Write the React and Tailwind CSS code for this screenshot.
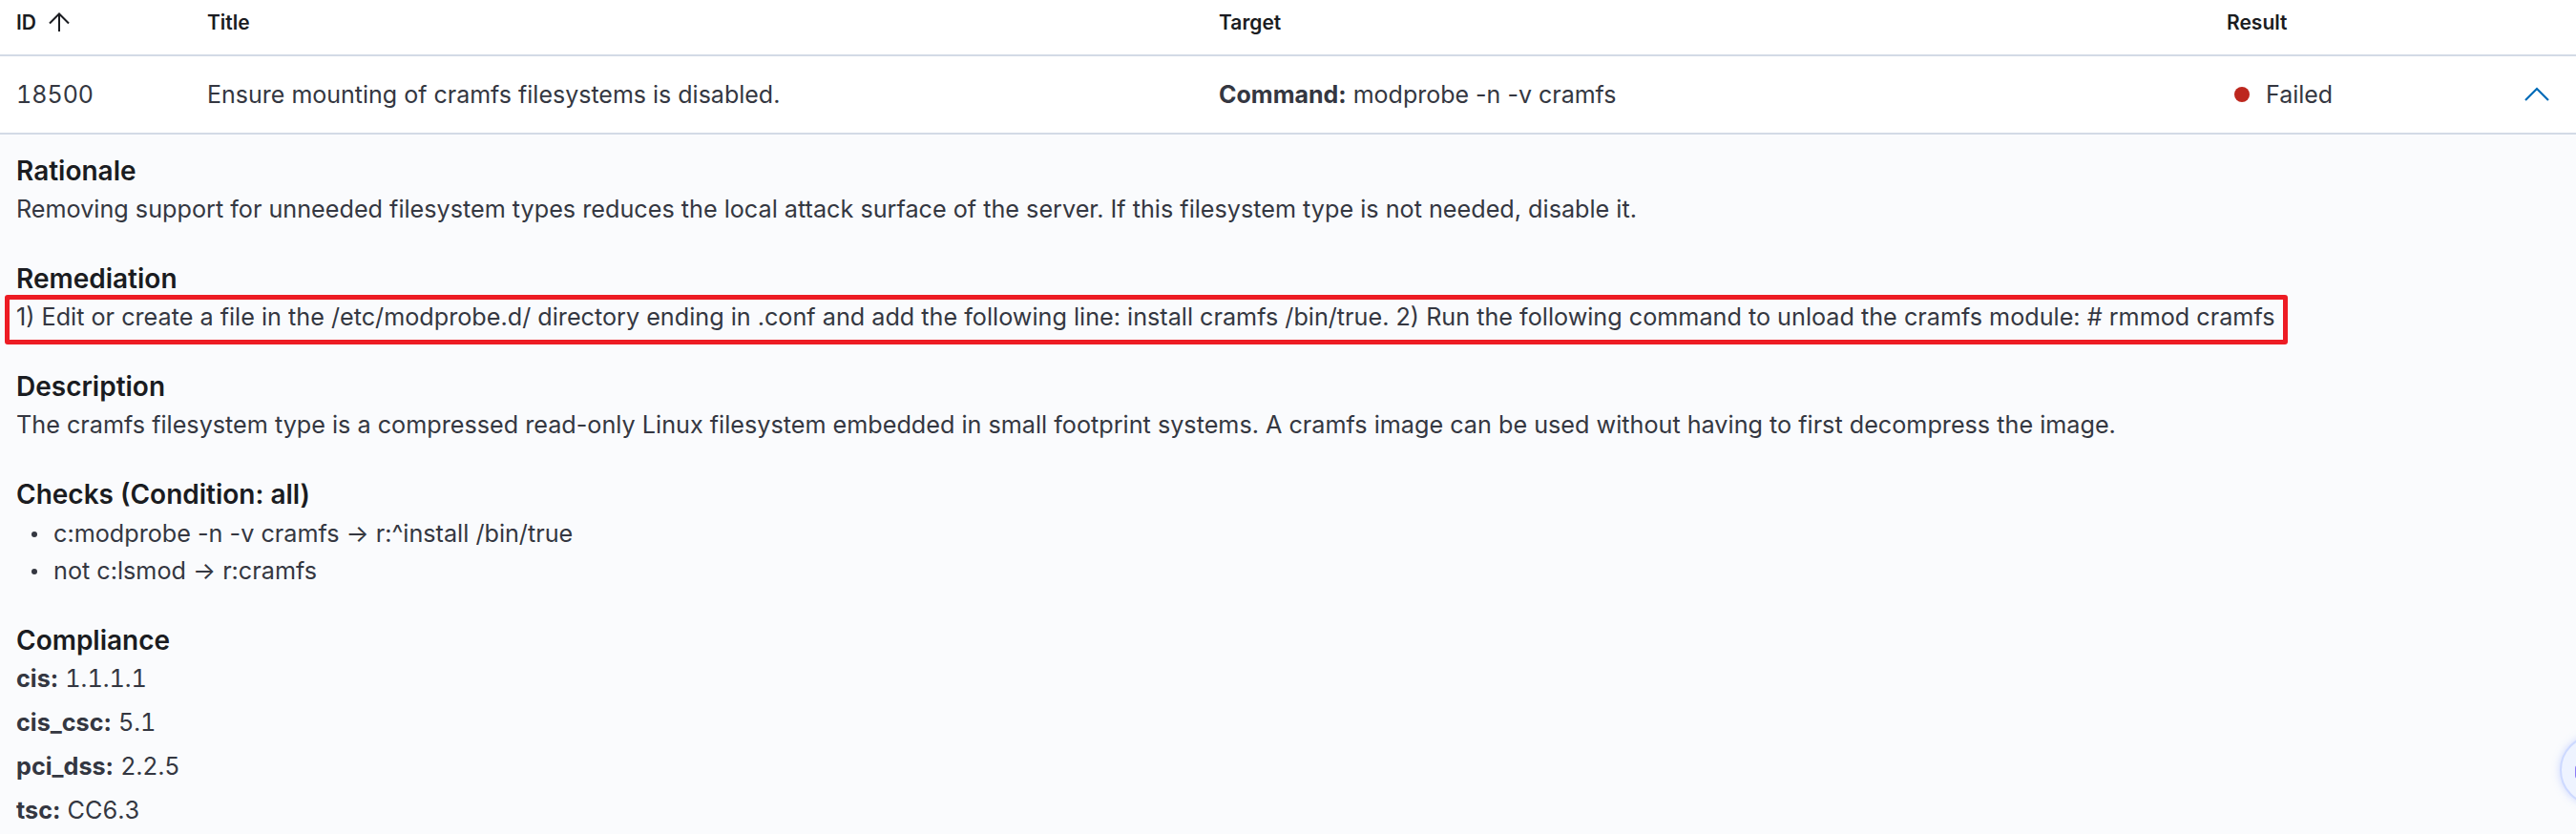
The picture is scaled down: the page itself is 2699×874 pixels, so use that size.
const checks = [
  'c:modprobe -n -v cramfs → r:^install /bin/true',
  'not c:lsmod → r:cramfs',
]

const compliance = [
  ['cis', '1.1.1.1'],
  ['cis_csc', '5.1'],
  ['pci_dss', '2.2.5'],
  ['tsc', 'CC6.3'],
]

function SortUpIcon() {
  return (
    <svg width="24" height="20" viewBox="0 0 24 20" fill="none" stroke="#1a1c21" strokeWidth="2">
      <path d="M12 20V1.5" />
      <path d="M2 11.5L12 1.5L22 11.5" />
    </svg>
  )
}

function Section({ title, children }) {
  return (
    <div className="mb-[33px]">
      <h3 className="text-[28px] leading-[40px] font-semibold text-[#1a1c21]">{title}</h3>
      {children}
    </div>
  )
}

export default function App() {
  return (
    <div
      className="relative w-[2699px] h-[874px] overflow-hidden bg-white text-[#343741]"
      style={{ fontFamily: 'Inter, "Noto Sans", sans-serif' }}
    >
      {/* table header */}
      <div className="grid grid-cols-[200px_1060px_1056px_1fr_80px] h-[59px] border-b-2 border-[#d3dae6] text-[21px] leading-[30px] font-semibold text-[#1a1c21]">
        <div className="pl-[17px] pt-[9px] flex items-start gap-[12px]">
          <span>ID</span>
          <span className="mt-[4px]">
            <SortUpIcon />
          </span>
        </div>
        <div className="pl-[17px] pt-[9px]">Title</div>
        <div className="pl-[17px] pt-[9px]">Target</div>
        <div className="pl-[17px] pt-[9px]">Result</div>
        <div />
      </div>

      {/* data row */}
      <div className="grid grid-cols-[200px_1060px_1056px_1fr_80px] h-[82px] border-b-2 border-[#d3dae6] items-center text-[25px] leading-[36px]">
        <div className="pl-[17px] tabular-nums">18500</div>
        <div className="pl-[17px]">Ensure mounting of cramfs filesystems is disabled.</div>
        <div className="pl-[17px]">
          <span className="font-bold">Command:</span> modprobe -n -v cramfs
        </div>
        <div className="pl-[25px] flex items-center gap-[17px]">
          <span className="w-[16px] h-[16px] rounded-full bg-[#bd271e]" />
          <span>Failed</span>
        </div>
        <div className="flex justify-center pr-[3px]">
          <svg width="28" height="16" viewBox="0 0 28 16" fill="none" stroke="#006bb8" strokeWidth="2.2">
            <path d="M2 14L14 2L26 14" />
          </svg>
        </div>
      </div>

      {/* expanded details */}
      <div className="h-full bg-[#fafbfd] pl-[17px] pt-[18px] text-[25.2px] leading-[40px]">
        <Section title="Rationale">
          <p>
            Removing support for unneeded filesystem types reduces the local attack surface of the server. If this
            filesystem type is not needed, disable it.
          </p>
        </Section>

        <Section title="Remediation">
          <p className="relative w-fit">
            1) Edit or create a file in the /etc/modprobe.d/ directory ending in .conf and add the following line:
            install cramfs /bin/true. 2) Run the following command to unload the cramfs module: # rmmod cramfs
            <span className="absolute -left-[12px] -right-[14px] -top-[3px] -bottom-[9px] border-[5px] border-[#ed1c24] rounded-[3px]" />
          </p>
        </Section>

        <Section title="Description">
          <p>
            The cramfs filesystem type is a compressed read-only Linux filesystem embedded in small footprint systems.
            A cramfs image can be used without having to first decompress the image.
          </p>
        </Section>

        <Section title="Checks (Condition: all)">
          <ul className="pt-[2px]">
            {checks.map((c) => (
              <li key={c} className="flex items-center leading-[39px]">
                <span className="w-[6px] h-[6px] rounded-full bg-[#343741] ml-[16px] mr-[17px]" />
                <span>{c}</span>
              </li>
            ))}
          </ul>
        </Section>

        <div>
          <h3 className="text-[28px] leading-[40px] font-semibold text-[#1a1c21]">Compliance</h3>
          <div className="flex flex-col gap-[6px]">
            {compliance.map(([k, v]) => (
              <div key={k}>
                <span className="font-bold">{k}:</span> <span className="tabular-nums">{v}</span>
              </div>
            ))}
          </div>
        </div>
      </div>

      {/* floating help button, cut by the window edge */}
      <div className="absolute left-[2682px] top-[770px] w-[74px] h-[74px] rounded-full bg-[#eef3ff] border-2 border-[#cdd9ff] shadow-[0_0_8px_rgba(120,150,255,0.35)]">
        <span className="absolute left-[14px] top-[30px] w-[6px] h-[14px] rounded-full bg-[#8b7cf6]" />
      </div>
    </div>
  )
}
